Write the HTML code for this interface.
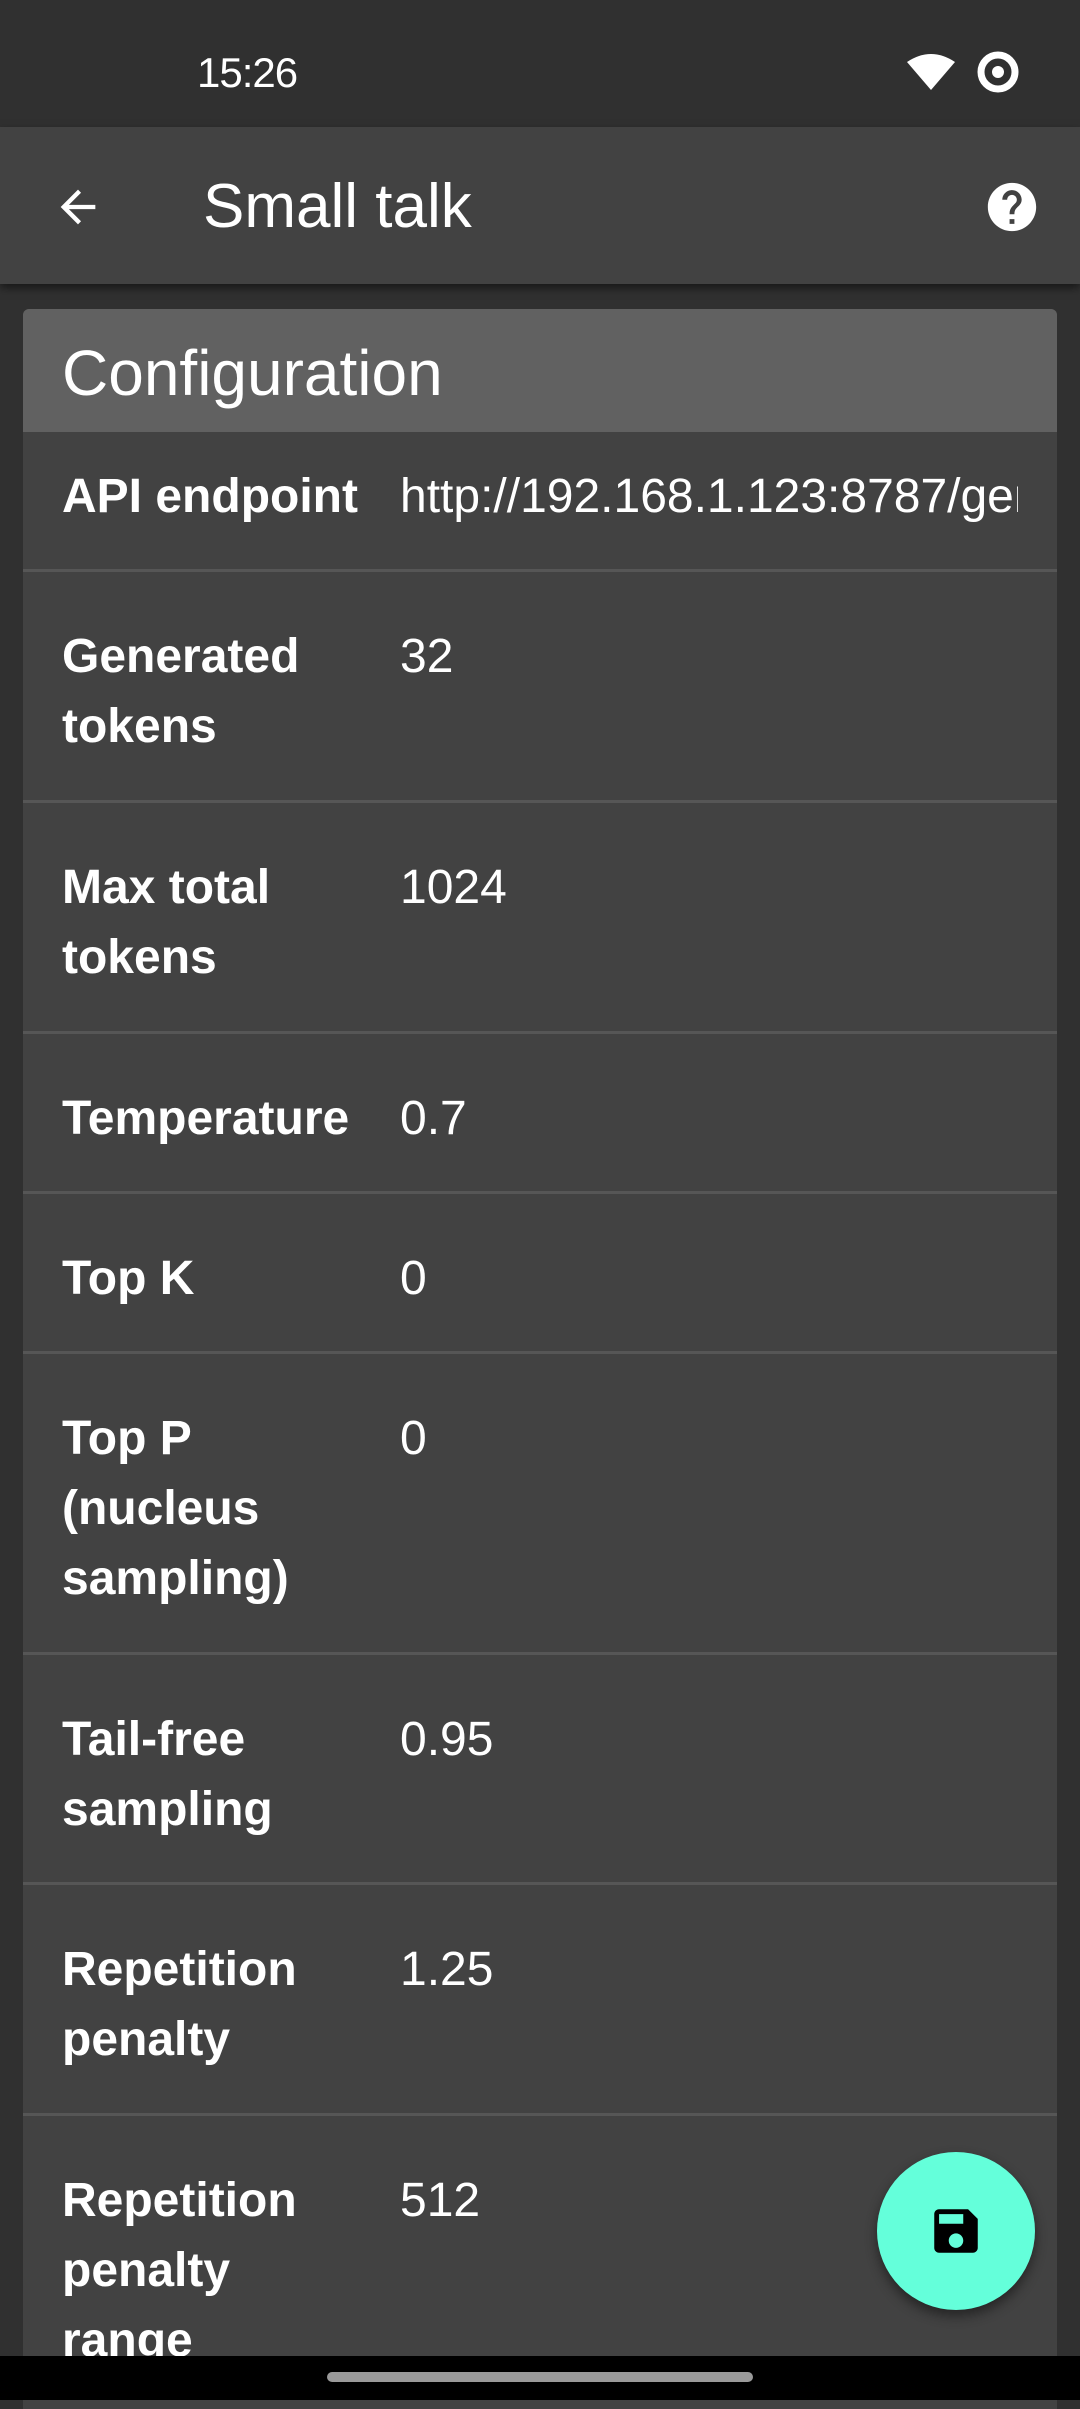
<!DOCTYPE html>
<html><head><meta charset="utf-8"><style>
*{margin:0;padding:0;box-sizing:border-box}
body{width:1080px;height:2400px;background:#303030;position:relative;overflow:hidden;font-family:"Liberation Sans",sans-serif;color:#fff}
.status{position:absolute;top:0;left:0;width:1080px;height:127px;background:#303030}
.time{position:absolute;left:197px;top:49px;font-size:42px;letter-spacing:-1px}
.appbar{position:absolute;top:127px;left:0;width:1080px;height:157px;background:#424242;box-shadow:0 4px 8px rgba(0,0,0,.5);z-index:2}
.title{position:absolute;left:203px;top:44px;font-size:62px}
.card{position:absolute;left:23px;top:309px;width:1034px;height:2100px;background:#424242;border-radius:6px 6px 0 0;overflow:hidden}
.head{height:123px;background:#616161;padding-left:39px;font-size:64px;line-height:128px}
.row{position:absolute;left:0;width:1034px;border-bottom:3px solid #565656}
.lab{position:absolute;left:39px;width:330px;font-weight:bold;font-size:48px;line-height:70px}
.val{position:absolute;left:377px;width:618px;font-size:48px;line-height:70px;white-space:nowrap;overflow:hidden}
.nav{position:absolute;top:2356px;left:0;width:1080px;height:44px;background:#000}
.handle{position:absolute;left:327px;top:16px;width:426px;height:10px;border-radius:5px;background:#9a9a9a}
.fab{position:absolute;left:877px;top:2152px;width:158px;height:158px;border-radius:50%;background:#64ffda;box-shadow:0 6px 12px rgba(0,0,0,.45)}
</style></head><body>
<div class="status"><div class="time">15:26</div>
<svg style="position:absolute;left:905px;top:52px" width="52" height="40" viewBox="0 0 52 40"><path d="M2 10 Q26 -6 50 10 L26 38 Z" fill="#fff"/></svg>
<svg style="position:absolute;left:973px;top:49px" width="50" height="46" viewBox="0 0 50 46"><circle cx="25" cy="23" r="17" fill="none" stroke="#fff" stroke-width="7"/><circle cx="25" cy="23" r="6" fill="#fff"/></svg>
</div>
<div class="appbar">
<svg style="position:absolute;left:52px;top:54px" width="52" height="52" viewBox="0 0 24 24"><path d="M20 11H7.8l5.6-5.6L12 4l-8 8 8 8 1.4-1.4L7.8 13H20z" fill="#fff"/></svg>
<div class="title">Small talk</div>
<svg style="position:absolute;left:983px;top:51px" width="58" height="58" viewBox="0 0 24 24"><path d="M12 2C6.48 2 2 6.48 2 12s4.48 10 10 10 10-4.48 10-10S17.52 2 12 2zm1 17h-2v-2h2v2zm2.07-7.75l-.9.92C13.45 12.9 13 13.5 13 15h-2v-.5c0-1.1.45-2.1 1.17-2.83l1.24-1.26c.37-.36.59-.86.59-1.41 0-1.1-.9-2-2-2s-2 .9-2 2H8c0-2.21 1.79-4 4-4s4 1.79 4 4c0 .88-.36 1.68-.93 2.25z" fill="#fff"/></svg>
</div>
<div class="card">
<div class="head">Configuration</div>
<div class="row" style="top:123px;height:140px"><div class="lab" style="top:30px">API endpoint</div><div class="val" style="top:30px">http://192.168.1.123:8787/generate</div></div>
<div class="row" style="top:263px;height:231px"><div class="lab" style="top:50px">Generated tokens</div><div class="val" style="top:50px">32</div></div>
<div class="row" style="top:494px;height:231px"><div class="lab" style="top:50px">Max total tokens</div><div class="val" style="top:50px">1024</div></div>
<div class="row" style="top:725px;height:160px"><div class="lab" style="top:50px">Temperature</div><div class="val" style="top:50px">0.7</div></div>
<div class="row" style="top:885px;height:160px"><div class="lab" style="top:50px">Top K</div><div class="val" style="top:50px">0</div></div>
<div class="row" style="top:1045px;height:301px"><div class="lab" style="top:50px">Top P (nucleus sampling)</div><div class="val" style="top:50px">0</div></div>
<div class="row" style="top:1346px;height:230px"><div class="lab" style="top:50px">Tail-free sampling</div><div class="val" style="top:50px">0.95</div></div>
<div class="row" style="top:1576px;height:231px"><div class="lab" style="top:50px">Repetition penalty</div><div class="val" style="top:50px">1.25</div></div>
<div class="row" style="top:1807px;height:400px;border:none"><div class="lab" style="top:50px;width:300px">Repetition penalty range</div><div class="val" style="top:50px">512</div></div>
</div>
<div class="fab"><svg style="position:absolute;left:50px;top:50px" width="58" height="58" viewBox="0 0 24 24"><path d="M17 3H5c-1.11 0-2 .9-2 2v14c0 1.1.89 2 2 2h14c1.1 0 2-.9 2-2V7l-4-4zm-5 16c-1.66 0-3-1.34-3-3s1.34-3 3-3 3 1.34 3 3-1.34 3-3 3zm3-10H5V5h10v4z" fill="#000"/></svg></div>
<div class="nav"><div class="handle"></div></div>
</body></html>
